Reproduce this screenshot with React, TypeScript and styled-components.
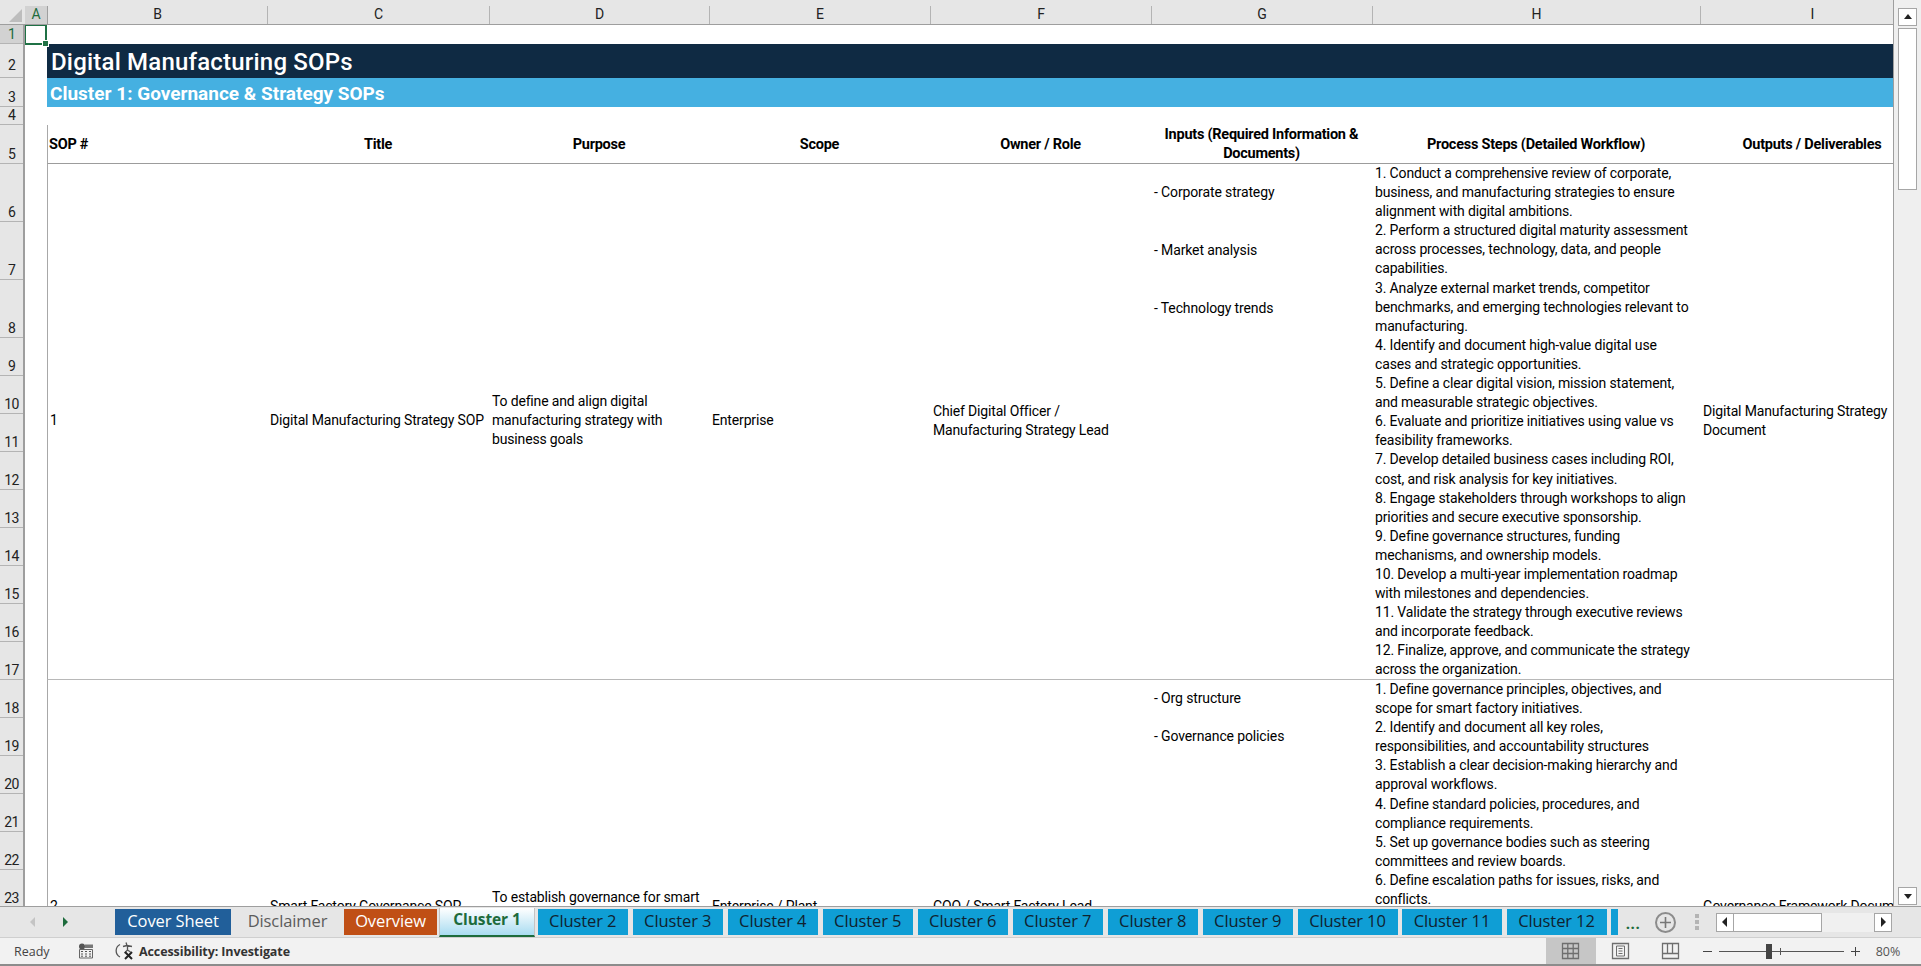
import React from 'react';
import styled, { createGlobalStyle } from 'styled-components';

const COLUMNS = '220px 222px 220px 221px 221px 221px 328px 224px';
const CELL_FONT = '"Roboto", "Liberation Sans", sans-serif';
const UI_FONT = '"Open Sans", "Noto Sans", sans-serif';

const GlobalStyle = createGlobalStyle`
  html, body { margin: 0; padding: 0; background: #fff; overflow: hidden; }
  * { box-sizing: border-box; }
`;

const Window = styled.div`
  width: 1921px;
  height: 966px;
  display: flex;
  flex-direction: column;
  overflow: hidden;
  font-family: ${CELL_FONT};
  color: #000;
`;

const Workspace = styled.div`
  height: 906px;
  flex: none;
  display: flex;
`;

const SheetPane = styled.div`
  width: 1893px;
  flex: none;
  display: flex;
  flex-direction: column;
  overflow: hidden;
`;

/* column letters */
const HeaderStrip = styled.div`
  height: 25px;
  flex: none;
  display: flex;
  align-items: stretch;
  background: #e6e6e6;
  padding-top: 6px;
  border-bottom: 1px solid #9e9e9e;
`;

const Corner = styled.div`
  width: 25px;
  flex: none;
  position: relative;
  &::after {
    content: '';
    position: absolute;
    right: 3px;
    bottom: 2px;
    border-style: solid;
    border-width: 0 0 13px 13px;
    border-color: transparent transparent #bdbdbd transparent;
  }
`;

const ColumnLetter = styled.div<{ $width: number; $active?: boolean }>`
  width: ${p => p.$width}px;
  flex: none;
  display: flex;
  align-items: center;
  justify-content: center;
  font-size: 14px;
  padding-bottom: 2px;
  color: ${p => (p.$active ? '#1d6b3c' : '#222')};
  background: ${p => (p.$active ? '#d2d2d2' : 'transparent')};
  border-right: 1px solid ${p => (p.$active ? '#9e9e9e' : '#b4b4b4')};
`;

const Body = styled.div`
  flex: 1;
  min-height: 0;
  display: flex;
  overflow: hidden;
`;

/* row numbers */
const RowRail = styled.div`
  width: 25px;
  flex: none;
  background: #e6e6e6;
  border-right: 2px solid #9e9e9e;
  display: flex;
  flex-direction: column;
  overflow: hidden;
`;

const RowNumber = styled.div<{ $height: number; $active?: boolean; $lift?: boolean }>`
  height: ${p => p.$height}px;
  flex: none;
  display: flex;
  align-items: flex-end;
  justify-content: center;
  font-size: 14px;
  line-height: 17px;
  letter-spacing: -0.7px;
  padding-bottom: ${p => (p.$lift ? 3 : 0)}px;
  color: ${p => (p.$active ? '#1d6b3c' : '#222')};
  background: ${p => (p.$active ? '#d2d2d2' : 'transparent')};
  border-bottom: 1px solid #b4b4b4;
`;

const Sheet = styled.div`
  width: 1868px;
  flex: none;
  display: flex;
  flex-direction: column;
  overflow: hidden;
  background: #fff;
`;

const BlankRow = styled.div<{ $height: number }>`
  height: ${p => p.$height}px;
  flex: none;
  position: relative;
`;

const SelectedCell = styled.div`
  position: absolute;
  left: -1px;
  top: -1px;
  width: 23px;
  height: 21px;
  border: 2px solid #1f7145;
  &::after {
    content: '';
    position: absolute;
    right: -4px;
    bottom: -4px;
    width: 5px;
    height: 5px;
    background: #1f7145;
    border: 1px solid #fff;
  }
`;

const TitleBand = styled.div`
  height: 34px;
  flex: none;
  margin-left: 22px;
  padding-left: 4px;
  background: #0f2a43;
  color: #fff;
  font-size: 24px;
  font-weight: 500;
  line-height: 36px;
  letter-spacing: 0.2px;
`;

const ClusterBand = styled.div`
  height: 29px;
  flex: none;
  margin-left: 22px;
  padding-left: 3px;
  background: #45b0e1;
  color: #fff;
  font-size: 19px;
  font-weight: 700;
  line-height: 31px;
`;

const TableRow = styled.div<{ $height: number; $heavy?: boolean }>`
  height: ${p => p.$height}px;
  flex: none;
  margin-left: 22px;
  display: grid;
  grid-template-columns: ${COLUMNS};
  border-left: 1px solid #a8a8a8;
  border-bottom: 1px solid ${p => (p.$heavy ? '#9c9c9c' : '#b8b8b8')};
`;

const HeadCell = styled.div<{ $left?: boolean }>`
  display: flex;
  align-items: center;
  justify-content: ${p => (p.$left ? 'flex-start' : 'center')};
  text-align: ${p => (p.$left ? 'left' : 'center')};
  padding: 0 ${p => (p.$left ? '1px' : '3px 0 1px')};
  font-size: 14.5px;
  font-weight: 700;
  line-height: 19px;
  letter-spacing: -0.25px;
`;

const Cell = styled.div`
  display: flex;
  align-items: center;
  padding: 0 2px 2px;
  font-size: 14px;
  line-height: 19px;
  letter-spacing: -0.16px;
  min-width: 0;
  white-space: pre-line;
`;

const InputStack = styled.div`
  display: flex;
  flex-direction: column;
`;

const InputRow = styled.div<{ $height: number }>`
  height: ${p => p.$height}px;
  flex: none;
  display: flex;
  align-items: center;
  padding: 0 2px 2px;
  font-size: 14px;
  letter-spacing: -0.13px;
`;

const Steps = styled.div`
  padding: 0 2px;
  display: flex;
  flex-direction: column;
  font-size: 14px;
  line-height: 19.1px;
  letter-spacing: -0.15px;
`;

const StepLine = styled.div`
  white-space: nowrap;
`;

const VerticalBar = styled.div`
  width: 28px;
  flex: none;
  background: #efefef;
  border-left: 1px solid #9e9e9e;
  display: flex;
  flex-direction: column;
  align-items: center;
  padding: 8px 0 1px;
  gap: 2px;
`;

const ScrollButton = styled.button`
  width: 19px;
  height: 18px;
  flex: none;
  padding: 0;
  display: flex;
  align-items: center;
  justify-content: center;
  background: #fff;
  border: 1px solid #a6a6a6;
`;

const ScrollThumb = styled.div`
  width: 19px;
  height: 162px;
  flex: none;
  background: #fff;
  border: 1px solid #a6a6a6;
`;

const ScrollGap = styled.div`
  flex: 1;
`;

const TabBar = styled.div`
  height: 32px;
  flex: none;
  display: flex;
  align-items: center;
  background: #e6e6e6;
  border-top: 1px solid #9e9e9e;
  border-bottom: 1px solid #cfcfcf;
  font-family: ${UI_FONT};
`;

const TabNav = styled.div`
  width: 110.5px;
  flex: none;
  height: 100%;
  display: flex;
  align-items: center;
  gap: 22px;
  padding-left: 28px;
`;

const Tabs = styled.div`
  width: 1507px;
  flex: none;
  display: flex;
  align-items: center;
  overflow: hidden;
`;

const Tab = styled.div<{ $width: number; $fill?: string; $text?: string; $active?: boolean }>`
  width: ${p => p.$width}px;
  height: ${p => (p.$active ? 30 : 26)}px;
  flex: none;
  margin-left: 4.5px;
  display: flex;
  align-items: center;
  justify-content: center;
  padding-bottom: 4px;
  font-size: 16.5px;
  letter-spacing: -0.1px;
  font-weight: ${p => (p.$active ? 700 : 400)};
  color: ${p => p.$text || '#10222f'};
  background: ${p => p.$fill || 'transparent'};
  position: relative;
  white-space: nowrap;
  ${p => p.$active && `
    font-size: 15.5px;
    background: linear-gradient(#ffffff, #a9dcf1);
    border: 1px solid #c4c4c4;
    border-bottom: 2px solid #1d6b3c;
    margin-left: 2px;
    margin-right: -2px;
    margin-top: -1px;
  `}
`;

const TabEnd = styled.div`
  display: flex;
  align-items: center;
  height: 100%;
  flex: none;
`;

const MoreTabs = styled.div`
  width: 31px;
  margin-right: 6px;
  text-align: center;
  color: #1d6b3c;
  font-size: 15px;
  font-weight: 700;
  line-height: 20px;
  padding-top: 2px;
  letter-spacing: 0.5px;
`;

const AddSheet = styled.div`
  width: 21px;
  height: 21px;
  flex: none;
  border: 2px solid #8c8c8c;
  border-radius: 50%;
  display: flex;
  align-items: center;
  justify-content: center;
`;

const Grip = styled.div`
  width: 4px;
  height: 16px;
  flex: none;
  margin-left: 19.5px;
  margin-right: 17px;
  background: repeating-linear-gradient(#b4b4b4 0 4px, transparent 4px 6px);
`;

const HorizontalBar = styled.div`
  width: 176px;
  height: 19px;
  flex: none;
  display: flex;
  background: #f0f0f0;
`;

const HorizontalButton = styled.div`
  width: 18px;
  height: 19px;
  flex: none;
  background: #fff;
  border: 1px solid #a6a6a6;
  display: flex;
  align-items: center;
  justify-content: center;
`;

const HorizontalThumb = styled.div`
  width: 88px;
  height: 19px;
  flex: none;
  background: #fff;
  border: 1px solid #a6a6a6;
  border-left: none;
`;

const HorizontalTrack = styled.div`
  flex: 1;
`;

const StatusBar = styled.div`
  height: 28px;
  flex: none;
  display: flex;
  align-items: center;
  background: #f2f2f2;
  border-bottom: 2px solid #8c8c8c;
  font-family: ${UI_FONT};
  font-size: 12.5px;
  color: #444;
`;

const Ready = styled.span`
  width: 78px;
  flex: none;
  padding-left: 14px;
`;

const MacroSlot = styled.span`
  width: 36px;
  flex: none;
  display: flex;
`;

const A11y = styled.span`
  display: flex;
  align-items: center;
  gap: 3px;
  font-weight: 700;
  color: #333;
  font-size: 12.5px;
  letter-spacing: -0.1px;
`;

const StatusRight = styled.div`
  margin-left: auto;
  display: flex;
  align-items: center;
  height: 100%;
`;

const ViewButton = styled.div<{ $on?: boolean }>`
  width: 50px;
  height: 100%;
  flex: none;
  display: flex;
  align-items: center;
  justify-content: center;
  background: ${p => (p.$on ? '#c6c6c6' : 'transparent')};
`;

const ZoomGroup = styled.div`
  display: flex;
  align-items: center;
  margin-left: 6px;
  width: 159px;
  flex: none;
  height: 100%;
  gap: 6px;
`;

const ZoomSign = styled.svg`
  width: 11px;
  height: 11px;
  flex: none;
`;

const ZoomTrack = styled.div`
  width: 125px;
  height: 1px;
  flex: none;
  background: #555;
  position: relative;
`;

const ZoomThumb = styled.div`
  position: absolute;
  left: 47px;
  top: -7px;
  width: 6px;
  height: 15px;
  background: #444;
`;

const ZoomTick = styled.div`
  position: absolute;
  left: 61px;
  top: -3px;
  width: 1px;
  height: 7px;
  background: #555;
`;

const ZoomLabel = styled.span`
  width: 60px;
  flex: none;
  text-align: center;
  padding-right: 6px;
  color: #555;
  font-size: 12.5px;
`;

const columnLetters: [string, number][] = [
  ['A', 23], ['B', 220], ['C', 222], ['D', 220], ['E', 221], ['F', 221], ['G', 221], ['H', 328], ['I', 224],
];

const rowHeights: [number, number][] = [
  [1, 19], [2, 34], [3, 29], [4, 18], [5, 39], [6, 58], [7, 58], [8, 58],
  [9, 38], [10, 38], [11, 38], [12, 38], [13, 38], [14, 38], [15, 38], [16, 38], [17, 38],
  [18, 38], [19, 38], [20, 38], [21, 38], [22, 38], [23, 38],
];

const headings = [
  'Title', 'Purpose', 'Scope', 'Owner / Role', 'Inputs (Required Information & Documents)',
  'Process Steps (Detailed Workflow)', 'Outputs / Deliverables',
];

const firstSteps = [
  '1. Conduct a comprehensive review of corporate,',
  'business, and manufacturing strategies to ensure',
  'alignment with digital ambitions.',
  '2. Perform a structured digital maturity assessment',
  'across processes, technology, data, and people',
  'capabilities.',
  '3. Analyze external market trends, competitor',
  'benchmarks, and emerging technologies relevant to',
  'manufacturing.',
  '4. Identify and document high-value digital use',
  'cases and strategic opportunities.',
  '5. Define a clear digital vision, mission statement,',
  'and measurable strategic objectives.',
  '6. Evaluate and prioritize initiatives using value vs',
  'feasibility frameworks.',
  '7. Develop detailed business cases including ROI,',
  'cost, and risk analysis for key initiatives.',
  '8. Engage stakeholders through workshops to align',
  'priorities and secure executive sponsorship.',
  '9. Define governance structures, funding',
  'mechanisms, and ownership models.',
  '10. Develop a multi-year implementation roadmap',
  'with milestones and dependencies.',
  '11. Validate the strategy through executive reviews',
  'and incorporate feedback.',
  '12. Finalize, approve, and communicate the strategy',
  'across the organization.',
];

const secondSteps = [
  '1. Define governance principles, objectives, and',
  'scope for smart factory initiatives.',
  '2. Identify and document all key roles,',
  'responsibilities, and accountability structures',
  '3. Establish a clear decision-making hierarchy and',
  'approval workflows.',
  '4. Define standard policies, procedures, and',
  'compliance requirements.',
  '5. Set up governance bodies such as steering',
  'committees and review boards.',
  '6. Define escalation paths for issues, risks, and',
  'conflicts.',
];

const tabs: { name: string; width: number; fill?: string; text?: string; active?: boolean }[] = [
  { name: 'Cover Sheet', width: 116, fill: '#215f9a', text: '#ffffff' },
  { name: 'Disclaimer', width: 104, text: '#5c5c5c' },
  { name: 'Overview', width: 93, fill: '#c04f15', text: '#ffffff' },
  { name: 'Cluster 1', width: 96, active: true, text: '#1d6b3c' },
  ...[2, 3, 4, 5, 6, 7, 8, 9].map(n => ({ name: `Cluster ${n}`, width: 90.5, fill: '#0f9ed5' })),
  ...[10, 11, 12].map(n => ({ name: `Cluster ${n}`, width: 100, fill: '#0f9ed5' })),
  { name: '', width: 40, fill: '#0f9ed5' },
];

const Arrow = ({ dir, color = '#222' }: { dir: 'up' | 'down' | 'left' | 'right'; color?: string }) => {
  const points = {
    up: '1,7 5,2 9,7',
    down: '1,3 5,8 9,3',
    left: '7,0 2,5 7,10',
    right: '3,0 8,5 3,10',
  }[dir];
  return (
    <svg width="10" height="10" viewBox="0 0 10 10">
      <polygon points={points} fill={color} />
    </svg>
  );
};

export default function App() {
  return (
    <Window>
      <GlobalStyle />
      <Workspace>
        <SheetPane>
          <HeaderStrip>
            <Corner />
            {columnLetters.map(([letter, width]) => (
              <ColumnLetter key={letter} $width={width} $active={letter === 'A'}>
                {letter}
              </ColumnLetter>
            ))}
          </HeaderStrip>

          <Body>
            <RowRail>
              {rowHeights.map(([n, h]) => (
                <RowNumber key={n} $height={h} $active={n === 1} $lift={n === 2}>
                  {n}
                </RowNumber>
              ))}
            </RowRail>

            <Sheet>
              <BlankRow $height={19}>
                <SelectedCell />
              </BlankRow>
              <TitleBand>Digital Manufacturing SOPs</TitleBand>
              <ClusterBand>Cluster 1: Governance &amp; Strategy SOPs</ClusterBand>
              <BlankRow $height={18} />

              <TableRow $height={39} $heavy>
                <HeadCell $left>SOP #</HeadCell>
                {headings.map(h => (
                  <HeadCell key={h}>{h}</HeadCell>
                ))}
              </TableRow>

              <TableRow $height={516}>
                <Cell>1</Cell>
                <Cell>Digital Manufacturing Strategy SOP</Cell>
                <Cell>{'To define and align digital\nmanufacturing strategy with\nbusiness goals'}</Cell>
                <Cell>Enterprise</Cell>
                <Cell>{'Chief Digital Officer /\nManufacturing Strategy Lead'}</Cell>
                <InputStack>
                  <InputRow $height={58}>- Corporate strategy</InputRow>
                  <InputRow $height={58}>- Market analysis</InputRow>
                  <InputRow $height={58}>- Technology trends</InputRow>
                </InputStack>
                <Steps>
                  {firstSteps.map(line => (
                    <StepLine key={line}>{line}</StepLine>
                  ))}
                </Steps>
                <Cell>{'Digital Manufacturing Strategy\nDocument'}</Cell>
              </TableRow>

              <TableRow $height={456}>
                <Cell>2</Cell>
                <Cell>Smart Factory Governance SOP</Cell>
                <Cell>{'To establish governance for smart\nfactory initiatives'}</Cell>
                <Cell>Enterprise / Plant</Cell>
                <Cell>COO / Smart Factory Lead</Cell>
                <InputStack>
                  <InputRow $height={38}>- Org structure</InputRow>
                  <InputRow $height={38}>- Governance policies</InputRow>
                </InputStack>
                <Steps>
                  {secondSteps.map(line => (
                    <StepLine key={line}>{line}</StepLine>
                  ))}
                </Steps>
                <Cell>Governance Framework Document</Cell>
              </TableRow>
            </Sheet>
          </Body>
        </SheetPane>

        <VerticalBar>
          <ScrollButton><Arrow dir="up" /></ScrollButton>
          <ScrollThumb />
          <ScrollGap />
          <ScrollButton><Arrow dir="down" /></ScrollButton>
        </VerticalBar>
      </Workspace>

      <TabBar>
        <TabNav>
          <Arrow dir="left" color="#c4c4c4" />
          <Arrow dir="right" color="#1d6b3c" />
        </TabNav>
        <Tabs>
          {tabs.map((t, i) => (
            <Tab key={i} $width={t.width} $fill={t.fill} $text={t.text} $active={t.active}>
              {t.name}
            </Tab>
          ))}
        </Tabs>
        <TabEnd>
          <MoreTabs>...</MoreTabs>
          <AddSheet>
            <svg width="13" height="13" viewBox="0 0 13 13">
              <path d="M6.5 1v11M1 6.5h11" stroke="#777" strokeWidth="1.6" />
            </svg>
          </AddSheet>
          <Grip />
          <HorizontalBar>
            <HorizontalButton><Arrow dir="left" /></HorizontalButton>
            <HorizontalThumb />
            <HorizontalTrack />
            <HorizontalButton><Arrow dir="right" /></HorizontalButton>
          </HorizontalBar>
        </TabEnd>
      </TabBar>

      <StatusBar>
        <Ready>Ready</Ready>
        <MacroSlot>
          <svg width="16" height="16" viewBox="0 0 16 16">
            <circle cx="4" cy="3.5" r="3" fill="#555" />
            <path d="M7 1.5h8v3.5h-8z" fill="#777" />
            <path d="M1.5 6.5h13v8.5h-13z" fill="none" stroke="#666" />
            <path d="M3 8.5h2M7 8.5h2M11 8.5h2M3 11h2M7 11h2M11 11h2M3 13.2h2M7 13.2h2M11 13.2h2" stroke="#555" />
          </svg>
        </MacroSlot>
        <A11y>
          <svg width="22" height="20" viewBox="0 0 22 20">
            <path d="M6 3.5a7 7 0 0 0 0 12.5" fill="none" stroke="#555" strokeWidth="1.3" />
            <path d="M12 1.5l1 3M13 4.5l-4 1M13 4.5l5 1M13.5 5v4l-3 3M13.5 9l3 2" fill="none" stroke="#555" strokeWidth="1.3" />
            <path d="M11 11l7 7M18 11l-7 7" stroke="#222" strokeWidth="2" />
          </svg>
          Accessibility: Investigate
        </A11y>
        <StatusRight>
          <ViewButton $on>
            <svg width="20" height="20" viewBox="0 0 20 20">
              <path d="M1.5 2.5h16v15h-16zM6.8 2.5v15M12.2 2.5v15M1.5 7.5h16M1.5 12.5h16" fill="none" stroke="#6e6e6e" strokeWidth="1.3" />
            </svg>
          </ViewButton>
          <ViewButton>
            <svg width="20" height="20" viewBox="0 0 20 20">
              <path d="M1.5 2.5h16v15h-16z" fill="none" stroke="#6e6e6e" strokeWidth="1.3" />
              <path d="M5.5 5h8v10h-8zM7.5 7.5h4M7.5 10h4M7.5 12.5h4" fill="none" stroke="#6e6e6e" />
            </svg>
          </ViewButton>
          <ViewButton>
            <svg width="20" height="20" viewBox="0 0 20 20">
              <path d="M1.5 2.5h16v15h-16zM1.5 12.5h16M6.5 2.5v10M11.5 2.5v10" fill="none" stroke="#6e6e6e" strokeWidth="1.3" />
            </svg>
          </ViewButton>
          <ZoomGroup>
            <ZoomSign viewBox="0 0 11 11"><path d="M1 5.5h9" stroke="#444" /></ZoomSign>
            <ZoomTrack>
              <ZoomThumb />
              <ZoomTick />
            </ZoomTrack>
            <ZoomSign viewBox="0 0 11 11"><path d="M1 5.5h9M5.5 1v9" stroke="#444" /></ZoomSign>
          </ZoomGroup>
          <ZoomLabel>80%</ZoomLabel>
        </StatusRight>
      </StatusBar>
    </Window>
  );
}
